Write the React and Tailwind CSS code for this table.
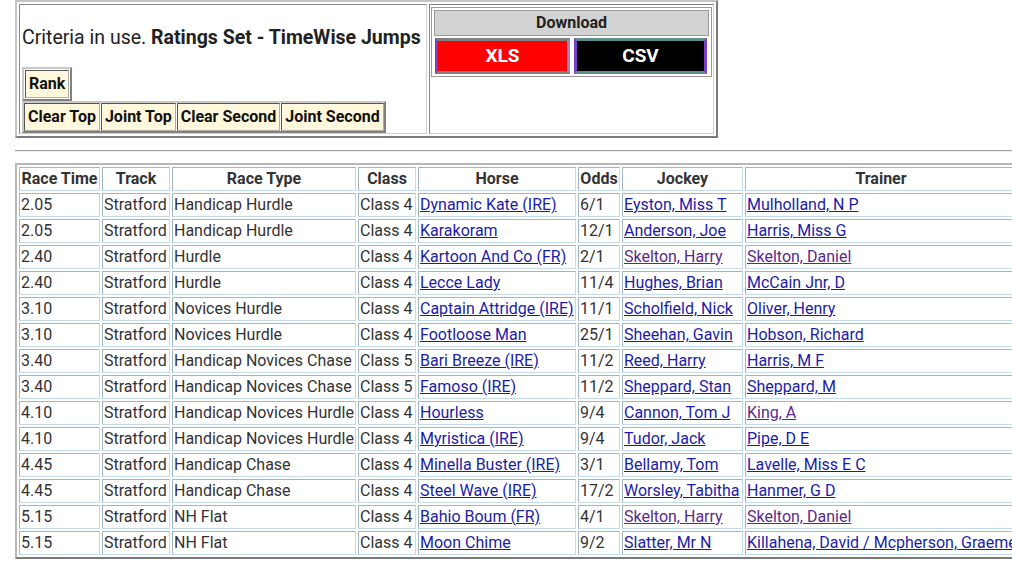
const rows = [
  ['2.05', 'Stratford', 'Handicap Hurdle', 'Class 4', 'Dynamic Kate (IRE)', '6/1', 'Eyston, Miss T', 'Mulholland, N P'],
  ['2.05', 'Stratford', 'Handicap Hurdle', 'Class 4', 'Karakoram', '12/1', 'Anderson, Joe', 'Harris, Miss G'],
  ['2.40', 'Stratford', 'Hurdle', 'Class 4', 'Kartoon And Co (FR)', '2/1', 'Skelton, Harry', 'Skelton, Daniel', true, true],
  ['2.40', 'Stratford', 'Hurdle', 'Class 4', 'Lecce Lady', '11/4', 'Hughes, Brian', 'McCain Jnr, D'],
  ['3.10', 'Stratford', 'Novices Hurdle', 'Class 4', 'Captain Attridge (IRE)', '11/1', 'Scholfield, Nick', 'Oliver, Henry'],
  ['3.10', 'Stratford', 'Novices Hurdle', 'Class 4', 'Footloose Man', '25/1', 'Sheehan, Gavin', 'Hobson, Richard'],
  ['3.40', 'Stratford', 'Handicap Novices Chase', 'Class 5', 'Bari Breeze (IRE)', '11/2', 'Reed, Harry', 'Harris, M F'],
  ['3.40', 'Stratford', 'Handicap Novices Chase', 'Class 5', 'Famoso (IRE)', '11/2', 'Sheppard, Stan', 'Sheppard, M'],
  ['4.10', 'Stratford', 'Handicap Novices Hurdle', 'Class 4', 'Hourless', '9/4', 'Cannon, Tom J', 'King, A', false, true],
  ['4.10', 'Stratford', 'Handicap Novices Hurdle', 'Class 4', 'Myristica (IRE)', '9/4', 'Tudor, Jack', 'Pipe, D E'],
  ['4.45', 'Stratford', 'Handicap Chase', 'Class 4', 'Minella Buster (IRE)', '3/1', 'Bellamy, Tom', 'Lavelle, Miss E C'],
  ['4.45', 'Stratford', 'Handicap Chase', 'Class 4', 'Steel Wave (IRE)', '17/2', 'Worsley, Tabitha', 'Hanmer, G D'],
  ['5.15', 'Stratford', 'NH Flat', 'Class 4', 'Bahio Boum (FR)', '4/1', 'Skelton, Harry', 'Skelton, Daniel', true, true],
  ['5.15', 'Stratford', 'NH Flat', 'Class 4', 'Moon Chime', '9/2', 'Slatter, Mr N', 'Killahena, David / Mcpherson, Graeme'],
]

const headers = [
  ['Race Time', 'w-[81px]'],
  ['Track', 'w-[68px]'],
  ['Race Type', 'w-[184px]'],
  ['Class', 'w-[58px]'],
  ['Horse', 'w-[158px]'],
  ['Odds', 'w-[42px]'],
  ['Jockey', 'w-[121px]'],
  ['Trainer', 'w-[272px]'],
]

const cell = 'border border-[#9fb6c4] border-r-[#c3dced] border-b-[#c3dced] px-px py-0 leading-[22px] whitespace-nowrap'

function Link({ children, visited }) {
  return (
    <a href="#" className={visited ? 'underline text-[#5c2a88]' : 'underline text-[#1c1ca8]'}>
      {children}
    </a>
  )
}

function ButtonCell({ children }) {
  return (
    <span className="border border-[#555] border-r-[#aaa] border-b-[#aaa] bg-[#fff8dc] px-[3px] leading-[26px] font-bold text-[#111]">
      {children}
    </span>
  )
}

export default function App() {
  return (
    <div className="w-[1012px] h-[568px] overflow-hidden bg-white pl-[15px] text-[16px] text-[#333]" style={{ fontFamily: 'Roboto, "Liberation Sans", sans-serif' }}>
      <div className="flex w-fit gap-[2px] p-[2px] border-2 border-[#c4c4c4] border-r-[#7c7c7c] border-b-[#7c7c7c]">
        <div className="w-[408px] h-[130px] border border-[#888] border-r-[#d0d0d0] border-b-[#d0d0d0] p-[2px]">
          <div className="pt-[19px] text-[19.5px] leading-[23px] text-[#222] whitespace-nowrap">
            Criteria in use. <b>Ratings Set - TimeWise Jumps</b>
          </div>
          <div className="mt-[18px] flex w-fit p-px border-2 border-[#c8c8c8] border-r-[#808080] border-b-[#808080]">
            <ButtonCell>Rank</ButtonCell>
          </div>
          <div className="flex w-fit gap-px p-0 border-2 border-[#c8c8c8] border-r-[#808080] border-b-[#808080]">
            <ButtonCell>Clear Top</ButtonCell>
            <ButtonCell>Joint Top</ButtonCell>
            <ButtonCell>Clear Second</ButtonCell>
            <ButtonCell>Joint Second</ButtonCell>
          </div>
        </div>
        <div className="w-[285px] h-[130px] border border-[#888] border-r-[#d0d0d0] border-b-[#d0d0d0] px-px pt-[2px]">
          <div className="flex flex-col gap-[2px] p-[2px] border border-[#999]">
            <div className="h-[26px] border border-[#999] bg-[#d3d3d3] text-center font-bold leading-[24px] text-[#222]">
              Download
            </div>
            <div className="flex gap-[4px] pl-px">
              <div className="w-[135px] h-[36px] border-[3px] border-[#808080] border-l-[#7a3fc4] border-r-[#9c86bc] bg-[#ff0000] flex items-center justify-center text-white font-bold text-[19px]">
                XLS
              </div>
              <div className="w-[133px] h-[36px] border-[3px] border-[#5f8c8c] border-l-[#7a3fc4] border-r-[#7a3fc4] bg-black flex items-center justify-center text-white font-bold text-[19px]">
                CSV
              </div>
            </div>
          </div>
        </div>
      </div>

      <div className="mt-[12px] mb-[11px] h-[2px] w-[1100px] border-t border-[#a0a0a0] border-b border-b-[#eee]" />

      <table className="table-fixed w-[1004px] border-separate border-spacing-[2px] border-2 border-[#b8b8b8] border-r-[#7a7a7a] border-b-[#7a7a7a]">
        <thead>
          <tr>
            {headers.map(([h, w]) => (
              <th key={h} className={`${cell} ${w} font-bold text-center text-[#333]`}>{h}</th>
            ))}
          </tr>
        </thead>
        <tbody>
          {rows.map((r, i) => (
            <tr key={i}>
              <td className={cell}>{r[0]}</td>
              <td className={cell}>{r[1]}</td>
              <td className={cell}>{r[2]}</td>
              <td className={cell}>{r[3]}</td>
              <td className={cell}><Link>{r[4]}</Link></td>
              <td className={cell}>{r[5]}</td>
              <td className={cell}><Link visited={r[8]}>{r[6]}</Link></td>
              <td className={cell}><Link visited={r[9]}>{r[7]}</Link></td>
            </tr>
          ))}
        </tbody>
      </table>
    </div>
  )
}
